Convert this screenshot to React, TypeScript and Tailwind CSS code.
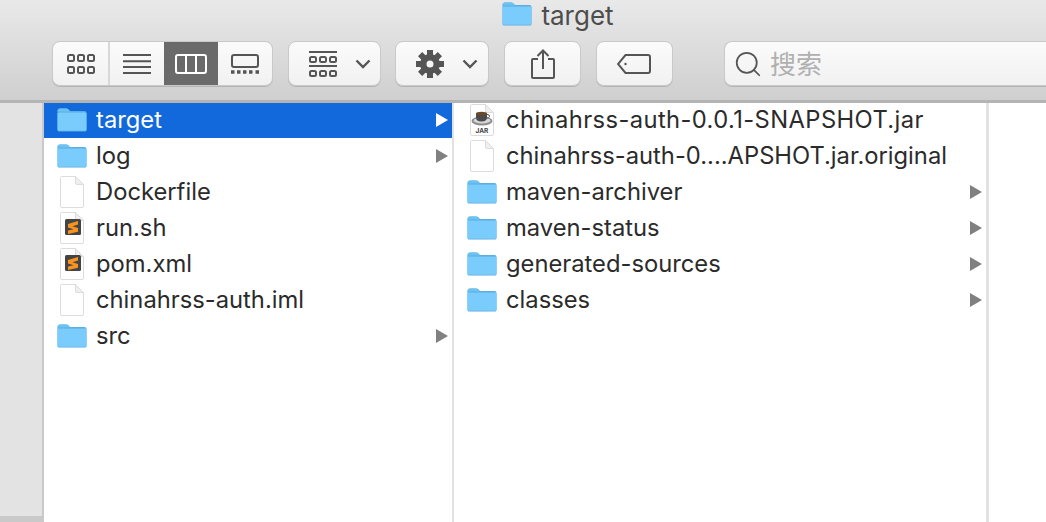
import * as React from "react";
import { Search } from "lucide-react";

const Folder = ({ className = "w-[30px] h-[24px]" }: { className?: string }) => (
  <svg viewBox="0 0 30 24" className={`${className} shrink-0`}>
    <path d="M0.5 3 Q0.5 0.5 3 0.5 H9.5 Q11 0.5 12 2 L12.8 3 H27.5 Q29.5 3 29.5 5 V22 Q29.5 23.5 28 23.5 H2 Q0.5 23.5 0.5 22 Z" fill="#5aaee0" />
    <path d="M0.5 5.5 Q0.5 4.5 2 4.5 H28 Q29.5 4.5 29.5 5.5 V21.5 Q29.5 22.8 28 22.8 H2 Q0.5 22.8 0.5 21.5 Z" fill="#79ccfb" />
    <path d="M0.5 3 Q0.5 0.5 3 0.5 H9.5 Q11 0.5 12 2 L13 3.6 H0.5 Z" fill="#6cc2f3" />
  </svg>
);

const Doc = ({ children }: { children?: React.ReactNode }) => (
  <svg viewBox="0 0 24 32" className="w-[24px] h-[32px] shrink-0">
    <path d="M1.5 0.5 H15.5 L23.5 8.5 V30 Q23.5 31.5 22 31.5 H2 Q0.5 31.5 0.5 30 V1.5 Q0.5 0.5 1.5 0.5 Z" fill="#fff" stroke="#dcdcdc" />
    <path d="M15.5 0.5 V7 Q15.5 8.5 17 8.5 H23.5 Z" fill="#efefef" stroke="#dcdcdc" />
    {children}
  </svg>
);

// sublime text badge
const SublimeDoc = () => (
  <Doc>
    <rect x="5" y="7" width="16" height="16" rx="1.5" fill="#444" />
    <path d="M8 12 L18 9 V12.5 L12.5 14.2 L18 16 V19.8 L8 22 V18.6 L13.5 17.2 L8 15.4 Z" fill="#f7931e" />
  </Doc>
);

const JarDoc = () => (
  <Doc>
    <ellipse cx="12" cy="17" rx="10.5" ry="4.5" fill="#8d8d8d" />
    <ellipse cx="12" cy="16.5" rx="8.5" ry="3" fill="#d6d6d6" />
    <path d="M6 9.5 H17 V13.5 Q17 17.5 11.5 17.5 Q6 17.5 6 13.5 Z" fill="#4b4b4b" />
    <ellipse cx="11.5" cy="9.5" rx="5.5" ry="1.7" fill="#6b4a2a" />
    <path d="M17 10.5 Q20 10.5 19.5 12.5 Q19 14 16 14.5" fill="none" stroke="#555" strokeWidth="1" />
    <text x="12" y="29" textAnchor="middle" fontSize="6.5" fontWeight="700" fill="#444" fontFamily="Inter, sans-serif">JAR</text>
  </Doc>
);

const Arrow = ({ active }: { active?: boolean }) => (
  <svg viewBox="0 0 12 14" className="w-[12px] h-[14px] shrink-0">
    <path d="M0 0 L12 7 L0 14 Z" fill={active ? "#fff" : "#808080"} />
  </svg>
);

const Chevron = () => (
  <svg viewBox="0 0 16 10" className="w-[16px] h-[10px]">
    <path d="M1.5 1.5 L8 8 L14.5 1.5" fill="none" stroke="#555" strokeWidth="2.4" />
  </svg>
);

const Gear = () => (
  <svg viewBox="0 0 28 28" className="w-[28px] h-[28px]" fill="#555">
    <path
      fillRule="evenodd"
      d="M14 4 A10 10 0 1 0 14 24 A10 10 0 1 0 14 4 Z M14 10.5 A3.5 3.5 0 1 1 14 17.5 A3.5 3.5 0 1 1 14 10.5 Z"
    />
    <rect x="11" y="0" width="6" height="6" />
    <rect x="11" y="22" width="6" height="6" />
    <rect x="0" y="11" width="6" height="6" />
    <rect x="22" y="11" width="6" height="6" />
    <rect x="11" y="0" width="6" height="6" transform="rotate(45 14 14)" />
    <rect x="11" y="22" width="6" height="6" transform="rotate(45 14 14)" />
    <rect x="0" y="11" width="6" height="6" transform="rotate(45 14 14)" />
    <rect x="22" y="11" width="6" height="6" transform="rotate(45 14 14)" />
  </svg>
);

type Item = { name: string; icon: React.ReactNode; arrow?: boolean; active?: boolean; wide?: boolean };

const col1: Item[] = [
  { name: "target", icon: <Folder />, arrow: true, active: true },
  { name: "log", icon: <Folder />, arrow: true },
  { name: "Dockerfile", icon: <Doc /> },
  { name: "run.sh", icon: <SublimeDoc /> },
  { name: "pom.xml", icon: <SublimeDoc /> },
  { name: "chinahrss-auth.iml", icon: <Doc /> },
  { name: "src", icon: <Folder />, arrow: true },
];

const col2: Item[] = [
  { name: "chinahrss-auth-0.0.1-SNAPSHOT.jar", icon: <JarDoc />, wide: true },
  { name: "chinahrss-auth-0....APSHOT.jar.original", icon: <Doc /> },
  { name: "maven-archiver", icon: <Folder />, arrow: true },
  { name: "maven-status", icon: <Folder />, arrow: true },
  { name: "generated-sources", icon: <Folder />, arrow: true },
  { name: "classes", icon: <Folder />, arrow: true },
];

function Row({ item }: { item: Item }) {
  return (
    <div className={`flex h-9 items-center pl-[13px] pr-[4px] ${item.active ? "bg-[#1169db] text-white" : "text-[#2b2b2b]"}`}>
      <div className="flex w-[30px] justify-center">{item.icon}</div>
      <span className={`ml-[9px] flex-1 truncate text-[23.75px] leading-9 ${item.wide ? "tracking-[0.4px]" : ""}`}>{item.name}</span>
      {item.arrow && <Arrow active={item.active} />}
    </div>
  );
}

const Btn = ({ className = "", children }: { className?: string; children?: React.ReactNode }) => (
  <div className={`flex h-[45px] items-center rounded-[8px] border border-[#c9c9c9] bg-gradient-to-b from-[#fbfbfb] to-[#f1f1f1] shadow-[0_1px_0_#b5b5b5] ${className}`}>
    {children}
  </div>
);

export default function App() {
  return (
    <div className="flex h-[522px] w-[1046px] flex-col overflow-hidden bg-white font-['Inter','Noto_Sans_CJK_SC',sans-serif]">
      <header className="relative z-10 h-[103px] shrink-0 border-b-[3px] border-[#b4b4b4] bg-gradient-to-b from-[#e9e9e9] to-[#cfcfcf]">
        <div className="flex h-[41px] items-start justify-center pl-[70px] pt-[2px]">
          <Folder />
          <span className="ml-[9px] text-[26px] leading-[28px] text-[#4d4d4d]">target</span>
        </div>
        <div className="flex items-center pl-[52px]">
          <Btn className="w-[221px] overflow-hidden">
            <div className="flex h-full w-[57px] items-center justify-center border-r-2 border-[#d8d8d8]">
              <svg viewBox="0 0 28 20" className="w-[28px] h-[20px]" fill="none" stroke="#555" strokeWidth="2">
                <rect x="1" y="1" width="6" height="6" rx="1.5" /><rect x="11" y="1" width="6" height="6" rx="1.5" /><rect x="21" y="1" width="6" height="6" rx="1.5" />
                <rect x="1" y="13" width="6" height="6" rx="1.5" /><rect x="11" y="13" width="6" height="6" rx="1.5" /><rect x="21" y="13" width="6" height="6" rx="1.5" />
              </svg>
            </div>
            <div className="flex h-full w-[54px] items-center justify-center">
              <svg viewBox="0 0 28 20" className="w-[28px] h-[20px]" stroke="#555" strokeWidth="2">
                <path d="M0 1 H28 M0 7.3 H28 M0 13 H28 M0 19 H28" />
              </svg>
            </div>
            <div className="flex h-[47px] w-[54px] items-center justify-center bg-[#6a6a6a]">
              <svg viewBox="0 0 32 20" className="w-[32px] h-[20px]" fill="none" stroke="#fff" strokeWidth="2">
                <rect x="1" y="1" width="30" height="18" rx="2" />
                <path d="M11 1 V19 M21 1 V19" />
              </svg>
            </div>
            <div className="flex h-full flex-1 items-center justify-center">
              <svg viewBox="0 0 28 20" className="w-[28px] h-[20px]" fill="none" stroke="#555" strokeWidth="2">
                <rect x="1" y="1" width="26" height="12" rx="2" />
                <path d="M0 18 H3.5 M6 18 H9.5 M12 18 H15.5 M18 18 H21.5 M24.5 18 H28" strokeWidth="3.5" />
              </svg>
            </div>
          </Btn>
          <Btn className="ml-[15px] w-[93px] justify-start pl-[20px]">
            <svg viewBox="0 0 28 26" className="w-[28px] h-[26px]" fill="none" stroke="#555" strokeWidth="2">
              <path d="M0 1 H28 M0 15 H28" />
              <rect x="1" y="6" width="6" height="5" rx="1.5" /><rect x="11" y="6" width="6" height="5" rx="1.5" /><rect x="21" y="6" width="6" height="5" rx="1.5" />
              <rect x="1" y="20" width="6" height="5" rx="1.5" /><rect x="11" y="20" width="6" height="5" rx="1.5" /><rect x="21" y="20" width="6" height="5" rx="1.5" />
            </svg>
            <span className="ml-[18px]"><Chevron /></span>
          </Btn>
          <Btn className="ml-[14px] w-[94px] justify-start pl-[20px]">
            <Gear />
            <span className="ml-[18px]"><Chevron /></span>
          </Btn>
          <Btn className="ml-[15px] w-[77px] justify-center">
            <svg viewBox="0 0 24 30" className="w-[24px] h-[30px]" fill="none" stroke="#555" strokeWidth="2">
              <path d="M7 10 H2 Q1 10 1 11 V28 Q1 29 2 29 H22 Q23 29 23 28 V11 Q23 10 22 10 H17" />
              <path d="M12 20 V1.5 M6.5 7 L12 1.5 L17.5 7" />
            </svg>
          </Btn>
          <Btn className="ml-[15px] w-[77px] justify-center">
            <svg viewBox="0 0 34 20" className="w-[34px] h-[20px] -translate-x-px" fill="none" stroke="#555" strokeWidth="2">
              <path d="M8.5 1 H31 Q33 1 33 3 V17 Q33 19 31 19 H8.5 L1 10 Z" />
              <circle cx="8.5" cy="10" r="1.2" fill="#555" stroke="none" />
            </svg>
          </Btn>
          <Btn className="ml-[51px] flex-1 rounded-r-none border-r-0 pl-[8px]">
            <Search size={30} strokeWidth={1.4} className="text-[#555]" />
            <span className="ml-[7px] mt-[2px] text-[26px] leading-none text-[#b0b0b0]">搜索</span>
          </Btn>
        </div>
      </header>
      <div className="flex min-h-0 flex-1">
        <aside className="flex w-[44px] shrink-0 flex-col justify-end border-r-2 border-[#c9c9c9] bg-[#e3e3e3]">
          <div className="-mr-[2px] h-[6px] bg-[#c9c9c9]" />
        </aside>
        <section className="w-[410px] shrink-0 border-r-2 border-[#e2e2e2]">
          <div className="-mt-px">{col1.map((i) => <Row key={i.name} item={i} />)}</div>
        </section>
        <section className="w-[535px] shrink-0 border-r-[3px] border-[#e2e2e2]">
          <div className="-mt-px">{col2.map((i) => <Row key={i.name} item={i} />)}</div>
        </section>
        <div className="flex-1" />
      </div>
    </div>
  );
}
